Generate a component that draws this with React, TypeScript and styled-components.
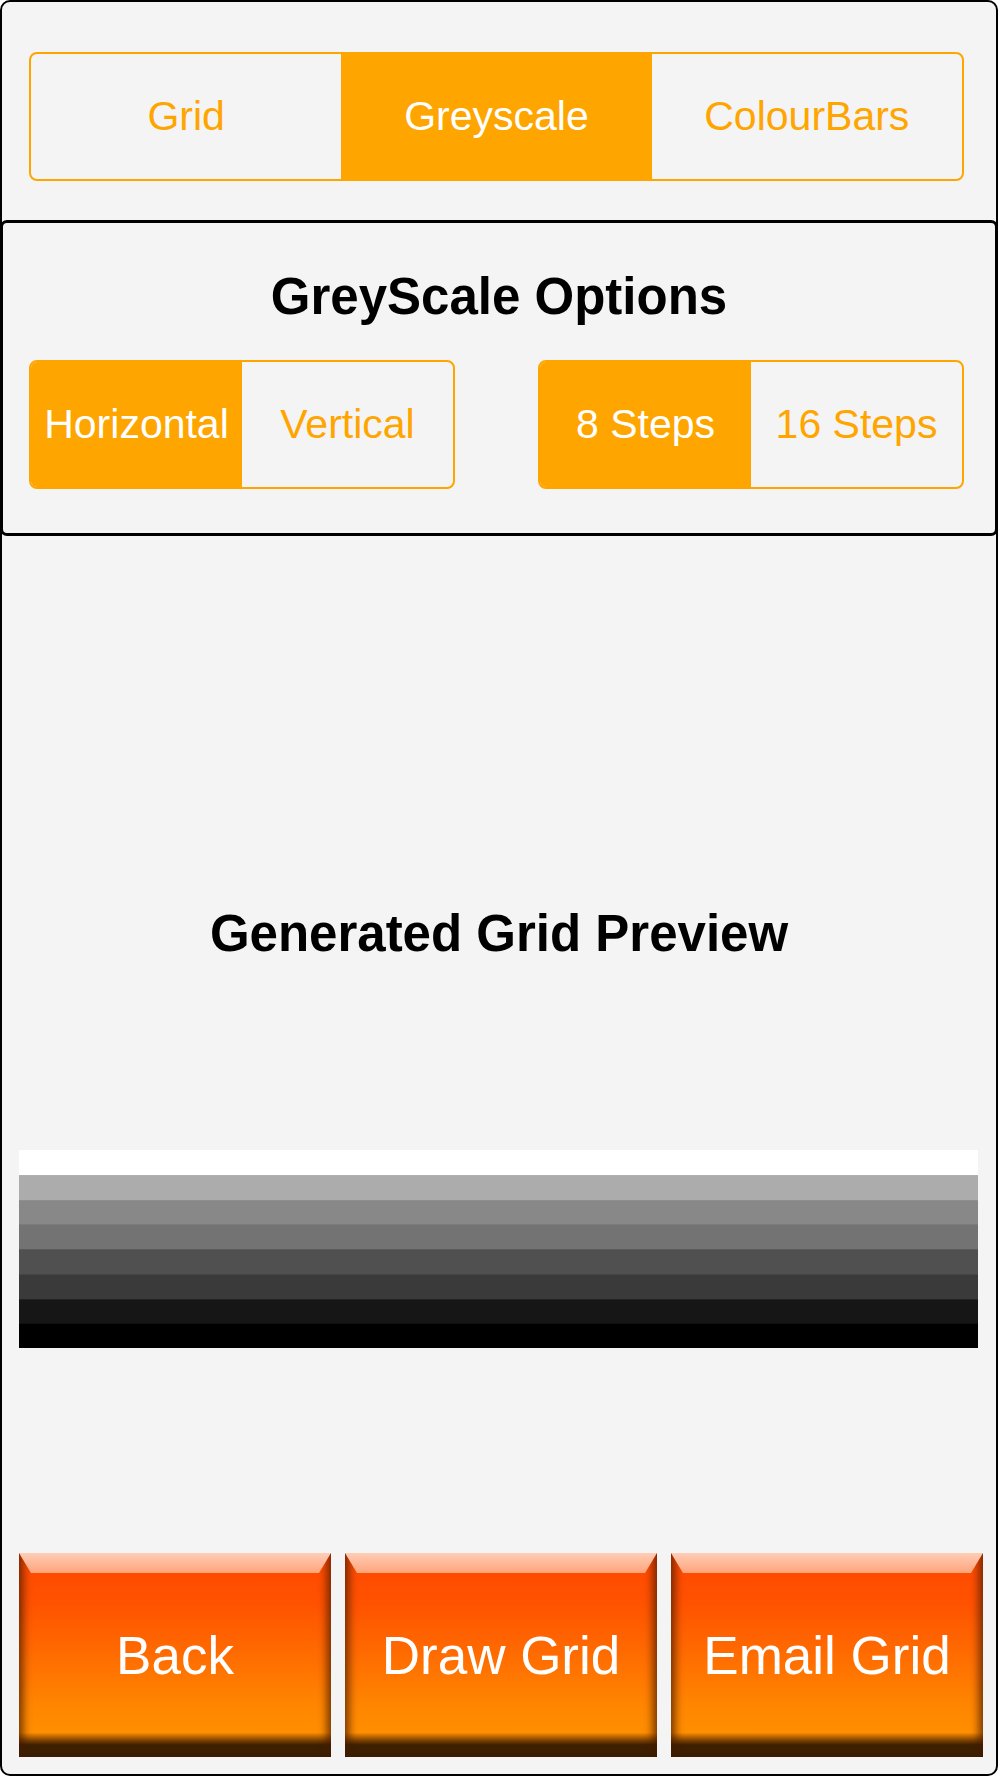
import React from "react"
import styled, { createGlobalStyle } from "styled-components"

const Global = createGlobalStyle`
html, body {
  margin: 0;
  padding: 0;
  background: #ffffff;
}
body {
  font-family: "Liberation Sans", Arial, Helvetica, sans-serif;
}
`

const ORANGE = "#ffa500"

const Frame = styled.div`
  box-sizing: border-box;
  width: 998px;
  height: 1776px;
  border: 2px solid #000;
  border-radius: 10px;
  background: #f4f4f4;
  display: flex;
  flex-direction: column;
  overflow: hidden;
`

const Header = styled.div`
  height: 218px;
  padding: 50px 0 0 27px;
  box-sizing: border-box;
`

const Segmented = styled.div<{ $width: number }>`
  display: flex;
  width: ${(p) => p.$width}px;
  height: 129px;
  box-sizing: border-box;
  border: 2px solid ${ORANGE};
  border-radius: 8px;
  overflow: hidden;
`

const Segment = styled.div<{ $active?: boolean }>`
  flex: 1;
  display: flex;
  align-items: center;
  justify-content: center;
  font-size: 41px;
  color: ${(p) => (p.$active ? "#fff" : ORANGE)};
  background: ${(p) => (p.$active ? ORANGE : "transparent")};
  white-space: nowrap;
`

const Options = styled.div`
  margin: 0 -2px;
  border: 3px solid #000;
  border-radius: 7px;
  height: 316px;
  box-sizing: border-box;
  display: flex;
  flex-direction: column;
`

const Title = styled.h2`
  margin: 0;
  font-size: 51px;
  line-height: 60px;
  font-weight: bold;
  color: #000;
  text-align: center;
`

const OptionTitle = styled(Title)`
  margin-top: 44px;
`

const OptionRow = styled.div`
  margin: 33px 0 0 26px;
  width: 935px;
  display: flex;
  justify-content: space-between;
`

const Preview = styled.div`
  flex: 1;
  display: flex;
  flex-direction: column;
`

const PreviewTitle = styled(Title)`
  margin-top: 368px;
`

const Ramp = styled.div`
  margin: 186px 18px 0 17px;
  height: 198px;
  display: grid;
  grid-template-rows: repeat(8, 1fr);
`

const Step = styled.div<{ $shade: string }>`
  background: ${(p) => p.$shade};
  box-shadow: inset 0 1px 0 rgba(255, 255, 255, 0.06);
`

const Buttons = styled.div`
  margin-top: 205px;
  display: flex;
  gap: 14px;
  padding: 0 12px 0 17px;
`

const GlossButton = styled.div`
  position: relative;
  width: 312px;
  height: 204px;
  display: flex;
  align-items: center;
  justify-content: center;
  color: #fff;
  font-size: 53px;
  background: linear-gradient(
    to bottom,
    #ff4800 0%,
    #ff5200 25%,
    #ff6c00 50%,
    #ff8600 75%,
    #ff8e00 88%,
    #7a3f00 92%,
    #3e2000 94%,
    #3b1f00 100%
  );
  box-shadow: inset 10px 0 9px -6px rgba(70, 25, 0, 0.75),
    inset -10px 0 9px -6px rgba(70, 25, 0, 0.75);

  &::before {
    content: "";
    position: absolute;
    left: 0;
    right: 0;
    top: 0;
    height: 20px;
    background: linear-gradient(to bottom, #ffcdb6, #ffa47a);
    clip-path: polygon(0 0, 100% 0, calc(100% - 12px) 100%, 12px 100%);
  }
`

const shades = ["#ffffff", "#acacac", "#888888", "#737373", "#505050", "#3a3a3a", "#161616", "#000000"]

export default function App() {
  return (
    <>
      <Global />
      <Frame>
        <Header>
          <Segmented $width={935}>
            <Segment>Grid</Segment>
            <Segment $active>Greyscale</Segment>
            <Segment>ColourBars</Segment>
          </Segmented>
        </Header>

        <Options>
          <OptionTitle>GreyScale Options</OptionTitle>
          <OptionRow>
            <Segmented $width={426}>
              <Segment $active>Horizontal</Segment>
              <Segment>Vertical</Segment>
            </Segmented>
            <Segmented $width={426}>
              <Segment $active>8 Steps</Segment>
              <Segment>16 Steps</Segment>
            </Segmented>
          </OptionRow>
        </Options>

        <Preview>
          <PreviewTitle>Generated Grid Preview</PreviewTitle>
          <Ramp>
            {shades.map((s) => (
              <Step key={s} $shade={s} />
            ))}
          </Ramp>
          <Buttons>
            <GlossButton>Back</GlossButton>
            <GlossButton>Draw Grid</GlossButton>
            <GlossButton>Email Grid</GlossButton>
          </Buttons>
        </Preview>
      </Frame>
    </>
  )
}
